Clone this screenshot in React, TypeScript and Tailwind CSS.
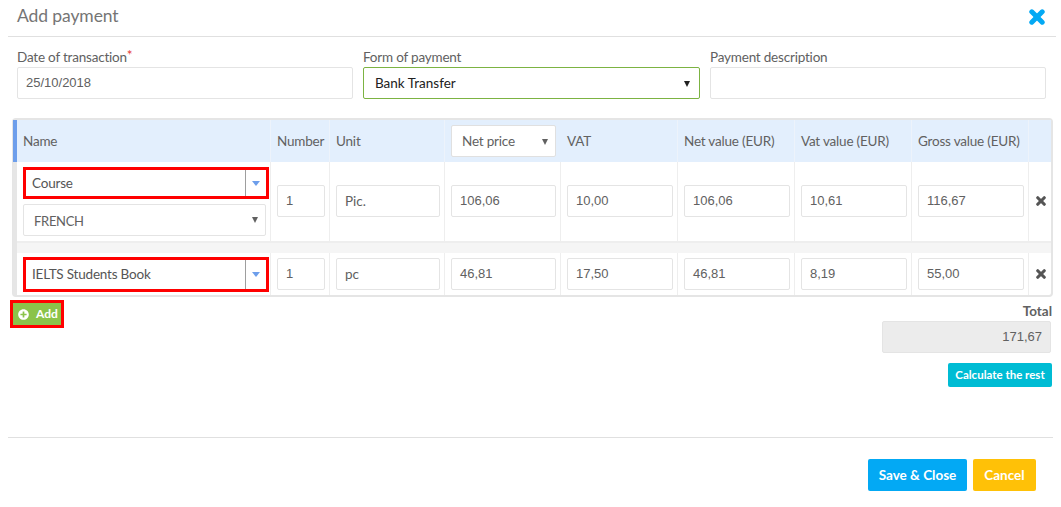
import { FaPlusCircle } from 'react-icons/fa';

const font = "font-['Lato','Noto_Sans',sans-serif]";
const numFont = "font-['Liberation_Sans',sans-serif]";
const columns = 'grid grid-cols-[254px_59px_115px_116px_117px_117px_117px_117px_23px]';

function Caret({ className }: { className: string }) {
  return (
    <svg viewBox="0 0 6 6" className={`h-[6px] w-[6px] ${className}`}>
      <polygon points="0,0 6,0 3,6" fill="currentColor" />
    </svg>
  );
}

function CloseIcon({ className }: { className: string }) {
  return (
    <svg viewBox="0 0 16 16" className={className} fill="none" stroke="currentColor" strokeWidth="5" strokeLinecap="round">
      <line x1="2.8" y1="2.8" x2="13.2" y2="13.2" />
      <line x1="13.2" y1="2.8" x2="2.8" y2="13.2" />
    </svg>
  );
}

function Field({ value, numeric = true }: { value: string; numeric?: boolean }) {
  return (
    <div
      className={`flex h-8 items-center rounded-[2px] border-[1.5px] border-[#e4e4e4] bg-white pl-[8px] text-[#616161] ${numeric ? `text-[13px] ${numFont}` : 'text-[13.5px]'}`}
    >
      {value}
    </div>
  );
}

function Cell({ children, last = false }: { children?: React.ReactNode; last?: boolean }) {
  return (
    <div className={`flex items-center ${last ? 'justify-center' : 'border-r border-[#eeeeee] pl-[6px] pr-[4px]'}`}>
      {children}
    </div>
  );
}

function Combo({ value, h }: { value: string; h: string }) {
  return (
    <div className={`flex ${h} w-[246px] items-stretch border-[3px] border-[#ff0000] bg-white text-[13.5px] tracking-[-0.2px] text-[#555555]`}>
      <div className="flex flex-1 items-center pl-[6px]">{value}</div>
      <div className="flex w-[21px] items-center justify-center border-l border-[#9e9e9e] text-[#6d9eeb]">
        <svg viewBox="0 0 8 5" className="h-[5px] w-[8px]">
          <polygon points="0,0 8,0 4,5" fill="currentColor" />
        </svg>
      </div>
    </div>
  );
}

function Row({ cells, tall, name }: { cells: string[]; tall: boolean; name: React.ReactNode }) {
  return (
    <div className={`${columns} ${tall ? 'h-[79px]' : 'h-[42px]'}`}>
      <div className="flex flex-col justify-center gap-[5px] border-r border-[#eeeeee] pl-[6px]">{name}</div>
      <Cell>
        <div className={`w-full ${tall ? 'mb-[1px]' : ''}`}><Field value={cells[0]} /></div>
      </Cell>
      <Cell>
        <div className={`w-full ${tall ? 'mb-[1px]' : ''}`}><Field value={cells[1]} numeric={false} /></div>
      </Cell>
      {cells.slice(2).map((v) => (
        <Cell key={v}>
          <div className={`w-full ${tall ? 'mb-[1px]' : ''}`}><Field value={v} /></div>
        </Cell>
      ))}
      <Cell last>
        <CloseIcon className={`h-[10px] w-[10px] text-[#555555] ${tall ? 'mb-[1px]' : ''}`} />
      </Cell>
    </div>
  );
}

function Labeled({ label, children, required }: { label: string; children: React.ReactNode; required?: boolean }) {
  return (
    <div className="flex flex-col">
      <div className="h-[21px] text-[13.5px] leading-[23px] tracking-[-0.2px] text-[#616161]">
        {label}
        {required && <span className="relative -top-[2px] text-[#e53935]">*</span>}
      </div>
      {children}
    </div>
  );
}

export default function App() {
  return (
    <div className={`h-[507px] w-[1061px] overflow-hidden bg-white ${font}`}>
      <div className="mx-2 flex h-[37px] w-[1048px] items-center justify-between border-b border-[#e0e0e0] pb-[3px] pl-[9px] pr-[11px]">
        <h1 className="text-[17.5px] tracking-[-0.1px] text-[#757575]">Add payment</h1>
        <CloseIcon className="h-[16px] w-[16px] text-[#03a9f4]" />
      </div>

      <div className="mt-[9px] ml-[17px] grid w-[1029px] grid-cols-[336px_337px_336px] gap-x-[10px]">
        <Labeled label="Date of transaction" required>
          <Field value="25/10/2018" />
        </Labeled>
        <Labeled label="Form of payment">
          <div className="flex h-8 items-center justify-between rounded-[2px] border border-[#7cb342] bg-white pl-[11px] pr-[9px] pt-[1px] text-[13.5px] text-[#212121]">
            Bank Transfer
            <Caret className="text-[#212121]" />
          </div>
        </Labeled>
        <Labeled label="Payment description">
          <Field value="" />
        </Labeled>
      </div>

      <div className="mt-[19px] ml-3 w-[1041px] rounded-[4px] border-2 border-l border-[#e5e5e5]">
        <div className={`${columns} h-[42px] border-l-4 border-[#6d9eeb] bg-[#e3effd] text-[13.5px] tracking-[-0.2px] text-[#616161]`}>
          <div className="flex items-center border-r border-[#edf3fb] pl-[6px]">Name</div>
          <div className="flex items-center border-r border-[#edf3fb] pl-[6px]">Number</div>
          <div className="flex items-center border-r border-[#edf3fb] pl-[6px]">Unit</div>
          <div className="flex items-center pl-[6px]">
            <div className="flex h-8 w-[105px] items-center justify-between rounded-[2px] border border-[#e0e0e0] bg-white pl-[10px] pr-[7px] pt-[1px]">
              Net price
              <Caret className="text-[#616161]" />
            </div>
          </div>
          <div className="flex items-center border-r border-[#edf3fb] pl-[6px]">VAT</div>
          <div className="flex items-center border-r border-[#edf3fb] pl-[6px]">Net value (EUR)</div>
          <div className="flex items-center border-r border-[#edf3fb] pl-[6px]">Vat value (EUR)</div>
          <div className="flex items-center border-r border-[#edf3fb] pl-[6px]">Gross value (EUR)</div>
          <div />
        </div>

        <div className="border-l-4 border-[#e6e6e6]">
          <Row
            tall
            cells={['1', 'Pic.', '106,06', '10,00', '106,06', '10,61', '116,67']}
            name={
              <>
                <Combo value="Course" h="h-8" />
                <div className="flex h-8 w-[243px] items-center justify-between rounded-[2px] border-[1.5px] border-[#e4e4e4] bg-white pl-[10px] pr-[7px] text-[13px] tracking-[-0.3px] text-[#616161]">
                  <span className="pt-[3px]">FRENCH</span>
                  <Caret className="text-[#616161]" />
                </div>
              </>
            }
          />
          <div className="h-[12px] border-t-2 border-[#eeeeee] bg-[#f5f5f5]" />
          <Row
            tall={false}
            cells={['1', 'pc', '46,81', '17,50', '46,81', '8,19', '55,00']}
            name={<Combo value="IELTS Students Book" h="h-[35px]" />}
          />
        </div>
      </div>

      <div className="ml-[10px] flex w-[1042px] justify-between">
        <div className="mt-[3px] h-7 border-[3px] border-[#ff0000]">
          <div className="flex h-full w-[48px] items-center gap-[7px] bg-[#8bc34a] pl-[5px] text-[12px] font-bold text-white">
            <FaPlusCircle className="text-[11px]" />
            Add
          </div>
        </div>
        <div className="flex flex-col items-end">
          <div className="mt-[5px] h-[19px] text-[13.5px] font-bold leading-[19px] text-[#616161]">Total</div>
          <div className={`mr-[1px] flex h-8 w-[169px] items-center justify-end rounded-[2px] border-[1.5px] border-[#e4e4e4] bg-[#ececec] pr-[8px] text-[13px] text-[#616161] ${numFont}`}>
            171,67
          </div>
          <button className="mt-[10px] h-6 w-[104px] rounded-[2px] bg-[#00bcd4] text-[11.5px] font-bold text-white">
            Calculate the rest
          </button>
        </div>
      </div>

      <div className="mx-2 mt-[50px] border-t border-[#e0e0e0]" />

      <div className="mt-[21px] mr-[25px] flex justify-end gap-[6px]">
        <button className="h-8 w-[99px] rounded-[2px] bg-[#03a9f4] text-[13.5px] font-bold text-white">Save &amp; Close</button>
        <button className="h-8 w-[63px] rounded-[2px] bg-[#ffc107] text-[13.5px] font-bold text-white">Cancel</button>
      </div>
    </div>
  );
}
